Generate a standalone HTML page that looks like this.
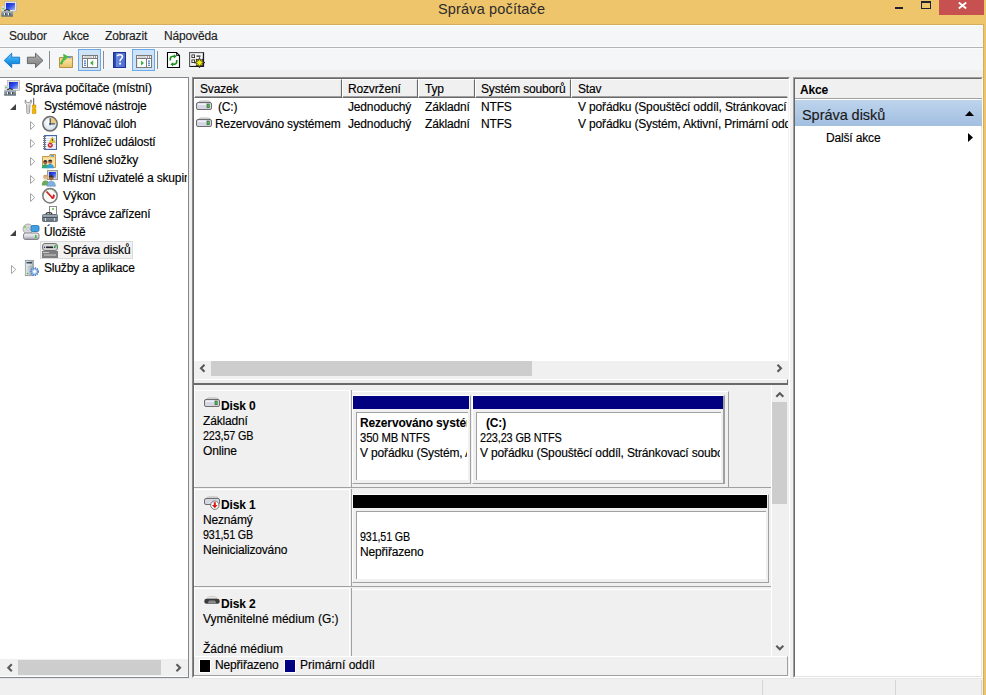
<!DOCTYPE html>
<html><head><meta charset="utf-8">
<style>
*{margin:0;padding:0;box-sizing:border-box}
html,body{width:986px;height:695px;overflow:hidden}
body{position:relative;background:#EFC56B;font-family:"Liberation Sans",sans-serif;font-size:12px;letter-spacing:-0.16px;color:#000;-webkit-text-stroke:0.15px currentColor}
.a{position:absolute}
.t{position:absolute;white-space:nowrap;line-height:18px;height:18px}
.b{font-weight:bold;-webkit-text-stroke:0.05px currentColor}
svg{position:absolute;overflow:visible}
.part{border-style:solid;border-width:1px;border-color:#fff #A0A0A0 #A0A0A0 #fff}
.nv{position:absolute;left:0;top:0;width:116px;height:13px}
.nv{width:calc(100% - 1px)}
.wb{position:absolute;left:3px;top:16px;height:68px;background:#fff;border-left:1px solid #A0A0A0;border-top:1px solid #A0A0A0}
.hc{top:79px;height:19px;border-style:solid;border-width:1px;border-color:#FFFFFF #696969 #696969 #FFFFFF;box-shadow:inset 0 -1px 0 #A0A0A0, inset -1px 0 0 #E3E3E3}
</style></head><body>

<div class="a" style="left:0;top:25px;width:983px;height:670px;background:#F0F0F0"></div>
<!-- TITLE BAR -->
<div class="a" style="left:0;top:24px;width:984px;height:1px;background:#D3AE5E"></div>
<div class="a" style="left:983px;top:24px;width:1px;height:671px;background:#D3AE5E"></div>
<div class="t" style="left:438px;top:1px;font-size:14.5px;line-height:16px;color:#2B2B2B;letter-spacing:0.16px;-webkit-text-stroke:0">Správa počítače</div>
<div class="a" style="left:895px;top:7px;width:8px;height:2px;background:#1F2230"></div>
<div class="a" style="left:921px;top:1px;width:10px;height:8px;border:1px solid #1F2230;border-top-width:2px"></div>
<div class="a" style="left:939px;top:0;width:45px;height:15px;background:#C75050"></div>
<svg style="left:958px;top:2px" width="9" height="7" viewBox="0 0 9 7"><path d="M0.8 0.5 L8.2 6.5 M8.2 0.5 L0.8 6.5" stroke="#fff" stroke-width="1.9"/></svg>


<!-- MENU BAR -->
<div class="a" style="left:0;top:25px;width:983px;height:22px;background:#F5F6F7;border-top:1px solid #FCFCFD"></div>
<div class="a" style="left:0;top:46px;width:983px;height:3px;background:#B4B4B4;border-top:1px solid #FBFBFB;border-bottom:1px solid #FBFBFB"></div>
<div class="t" style="left:9px;top:27px;color:#1E1E1E">Soubor</div>
<div class="t" style="left:63px;top:27px;color:#1E1E1E">Akce</div>
<div class="t" style="left:105px;top:27px;color:#1E1E1E">Zobrazit</div>
<div class="t" style="left:164px;top:27px;color:#1E1E1E">Nápověda</div>

<!-- TOOLBAR -->
<div class="a" style="left:0;top:49px;width:983px;height:21px;background:#F5F6F7"></div>
<div class="a" style="left:0;top:70px;width:983px;height:7px;background:#F0F0F0"></div>

<!-- CLIENT -->

<!-- TOOLBAR ICONS -->
<svg style="left:0;top:0" width="986" height="80" viewBox="0 0 986 80">
 <defs>
  <linearGradient id="gBlue" x1="0" y1="0" x2="0" y2="1"><stop offset="0" stop-color="#6CC8FA"/><stop offset="0.55" stop-color="#1E9BEA"/><stop offset="1" stop-color="#0A6FC8"/></linearGradient>
  <linearGradient id="gGray" x1="0" y1="0" x2="0" y2="1"><stop offset="0" stop-color="#B4B4B4"/><stop offset="1" stop-color="#7A7A7A"/></linearGradient>
  <linearGradient id="gFold" x1="0" y1="0" x2="0" y2="1"><stop offset="0" stop-color="#F8E2A0"/><stop offset="1" stop-color="#E9C46A"/></linearGradient>
  <linearGradient id="gHelp" x1="0" y1="0" x2="1" y2="0"><stop offset="0" stop-color="#2440A8"/><stop offset="0.2" stop-color="#2E4FB8"/><stop offset="0.25" stop-color="#6B89E0"/><stop offset="1" stop-color="#4868CC"/></linearGradient>
 </defs>
 <!-- app icon -->
 <g id="appic">
 <rect x="4.5" y="1.5" width="12" height="10" fill="#E6E4DC" stroke="#B8B8B0" stroke-width="0.8"/>
 <rect x="6" y="3" width="9" height="7" fill="url(#gScr)"/>
 <rect x="1.5" y="6" width="3" height="5" fill="#D8D8E0"/>
 <rect x="2.2" y="8" width="1.8" height="1" fill="#50E050"/>
 <path d="M4.5 11 C5 9.3 9 9.3 9.5 11" fill="none" stroke="#1A1A1A" stroke-width="1.2"/>
 <rect x="1.2" y="11.2" width="11.8" height="5.5" fill="url(#gSteel)"/>
 <rect x="4" y="13" width="1.2" height="2.2" fill="#F4F4F4"/><rect x="8" y="13" width="1.2" height="2.2" fill="#F4F4F4"/>
 <rect x="5.2" y="13" width="1" height="2.2" fill="#2A3440"/><rect x="9.2" y="13" width="1" height="2.2" fill="#2A3440"/>
 </g>
 <!-- back/forward -->
 <path d="M4.2 60.5 L11.7 53.2 L11.7 57.2 L19.6 57.2 L19.6 63.6 L11.7 63.6 L11.7 67.6 Z" fill="url(#gBlue)" stroke="#1273C9" stroke-width="0.9"/>
 <path d="M43 60.5 L35.5 53.2 L35.5 57.2 L27.4 57.2 L27.4 63.6 L35.5 63.6 L35.5 67.6 Z" fill="url(#gGray)" stroke="#5C5C5C" stroke-width="0.9"/>
 <rect x="49" y="51" width="1" height="18" fill="#8C8C8C"/>
 <rect x="103" y="51" width="1" height="18" fill="#8C8C8C"/>
 <rect x="157" y="51" width="1" height="18" fill="#8C8C8C"/>
 <!-- folder up -->
 <path d="M59.5 57.5 L59.5 67.5 L72.5 67.5 L72.5 56.5 L66 56.5 L65 57.5 Z" fill="#EFD08A" stroke="#B89040"/>
 <rect x="67.5" y="56.5" width="4" height="1.5" fill="#5AA0E8"/>
 <path d="M60 59.5 L72 59.5 L72 67 L60 67 Z" fill="url(#gFold)"/>
 <path d="M60.5 63.8 C61.5 60.5 62.5 58.8 64.2 57.8 L63.5 54.3 L67.8 56.6 L65.3 59.6 C63.8 60.2 62.8 61.6 62 64.2 Z" fill="#48C848" stroke="#28A028" stroke-width="0.6"/>
 <!-- highlighted btn 1 -->
 <rect x="78.5" y="49.5" width="22" height="21" fill="#CDE4F8" stroke="#6AAAEC"/>
 <rect x="82.5" y="55.5" width="15" height="12" fill="#FFFFFF" stroke="#7A7A7A"/>
 <rect x="83" y="56" width="14" height="2" fill="#F4F4F4"/>
 <rect x="84" y="56.5" width="8" height="1" fill="#B8B8B8"/>
 <rect x="93" y="56" width="1" height="2" fill="#9A9A9A"/><rect x="95" y="56" width="1" height="2" fill="#9A9A9A"/>
 <rect x="83" y="58" width="14" height="1" fill="#7A7A7A"/>
 <rect x="87" y="59" width="1" height="8" fill="#7A7A7A"/>
 <rect x="84" y="60.5" width="2" height="1.2" fill="#3C78C8"/><rect x="84" y="62.6" width="2" height="1.2" fill="#3C78C8"/><rect x="84" y="64.7" width="2" height="1.2" fill="#3C78C8"/>
 <path d="M93 60.5 L90 63 L93 65.5 Z" fill="#3CB43C"/>
 <rect x="93" y="60" width="1" height="6" fill="#E8E8E8"/>
 <!-- help -->
 <rect x="113" y="52" width="13" height="16" fill="url(#gHelp)"/>
 <rect x="113.5" y="52.5" width="12" height="15" fill="none" stroke="#1E3296" stroke-width="1"/>
 <path d="M117.3 56.3 C117.3 54.3 122.5 54 122.5 56.8 C122.5 58.6 120 59 120 61.2" fill="none" stroke="#fff" stroke-width="1.6"/>
 <rect x="119.2" y="62.7" width="1.8" height="1.8" fill="#fff"/>
 <!-- highlighted btn 2 -->
 <rect x="132.5" y="49.5" width="22" height="21" fill="#CDE4F8" stroke="#6AAAEC"/>
 <rect x="136.5" y="55.5" width="15" height="12" fill="#FFFFFF" stroke="#7A7A7A"/>
 <rect x="137" y="56" width="14" height="2" fill="#F4F4F4"/>
 <rect x="138" y="56.5" width="8" height="1" fill="#B8B8B8"/>
 <rect x="147" y="56" width="1" height="2" fill="#9A9A9A"/><rect x="149" y="56" width="1" height="2" fill="#9A9A9A"/>
 <rect x="137" y="58" width="14" height="1" fill="#7A7A7A"/>
 <rect x="146" y="59" width="1" height="8" fill="#7A7A7A"/>
 <rect x="148" y="60.5" width="2" height="1.2" fill="#3C78C8"/><rect x="148" y="62.6" width="2" height="1.2" fill="#3C78C8"/><rect x="148" y="64.7" width="2" height="1.2" fill="#3C78C8"/>
 <path d="M141 60.5 L144 63 L141 65.5 Z" fill="#3CB43C"/>
 <rect x="137" y="59" width="1" height="8" fill="#E8E8E8"/>
 <!-- refresh doc -->
 <path d="M167.5 52.5 L176.5 52.5 L179.5 55.5 L179.5 67.5 L167.5 67.5 Z" fill="#fff" stroke="#000" stroke-width="1.1"/>
 <path d="M176.5 52.5 L176.5 55.5 L179.5 55.5" fill="none" stroke="#000" stroke-width="0.8"/>
 <path d="M170.3 60.5 L170.3 58.5 C170.3 57 171.5 56.3 174 56.3" fill="none" stroke="#1A8F1A" stroke-width="1.6"/>
 <path d="M173.8 54.2 L176.6 56.3 L173.8 58.4 Z" fill="#1A8F1A"/>
 <path d="M176.7 60 L176.7 62 C176.7 63.5 175.5 64.3 173 64.3" fill="none" stroke="#1A8F1A" stroke-width="1.6"/>
 <path d="M173.2 62.2 L170.4 64.3 L173.2 66.4 Z" fill="#1A8F1A"/>
 <!-- properties -->
 <rect x="189.5" y="52.5" width="14" height="14" fill="#E0E0E0" stroke="#5A5A5A"/>
 <path d="M190 66.5 L203.5 66.5 L203.5 52.5" fill="none" stroke="#1A1A1A" stroke-width="1.2"/>
 <rect x="191" y="54" width="11" height="11" fill="#F6F6F6"/>
 <rect x="191.5" y="54.5" width="3.5" height="3.5" fill="#1A1A1A"/><rect x="192.3" y="55.3" width="1.9" height="1.9" fill="#fff"/>
 <rect x="196.5" y="55.5" width="4" height="1.2" fill="#1A1A1A"/>
 <rect x="191.5" y="59.5" width="3.5" height="3.5" fill="#1A1A1A"/><rect x="192.3" y="60.3" width="1.9" height="1.9" fill="#fff"/>
 <rect x="196.5" y="59.5" width="4" height="3.5" fill="#1A1A1A"/>
 <path d="M199.5 57.5 L200.4 60.4 L203 59 L201.8 61.7 L205 62.6 L201.8 63.5 L203 66.3 L200.4 64.9 L199.5 67.8 L198.6 64.9 L196 66.3 L197.2 63.5 L194 62.6 L197.2 61.7 L196 59 L198.6 60.4 Z" fill="#F4EC10" stroke="#1A1A1A" stroke-width="0.8"/>
</svg>


<!-- TREE PANE -->
<div class="a" style="left:0;top:77px;width:189px;height:601px;background:#fff;border-top:1px solid #828790;border-right:1px solid #828790;border-bottom:1px solid #828790"></div>
<div class="a" style="left:40px;top:241px;width:93px;height:18px;background:#F2F2F2;border:1px solid #DADADA"></div>
<div class="t" style="left:25px;top:79px">Správa počítače (místní)</div>
<div class="t" style="left:44px;top:97px">Systémové nástroje</div>
<div class="t" style="left:63px;top:115px">Plánovač úloh</div>
<div class="t" style="left:63px;top:133px">Prohlížeč událostí</div>
<div class="t" style="left:63px;top:151px">Sdílené složky</div>
<div class="a" style="left:63px;top:169px;width:124px;height:18px;overflow:hidden"><div class="t" style="left:0;top:0">Místní uživatelé a skupiny</div></div>
<div class="t" style="left:63px;top:187px">Výkon</div>
<div class="t" style="left:63px;top:205px">Správce zařízení</div>
<div class="t" style="left:44px;top:223px">Úložiště</div>
<div class="t" style="left:63px;top:241px">Správa disků</div>
<div class="t" style="left:44px;top:259px">Služby a aplikace</div>
<!-- tree scrollbar -->
<div class="a" style="left:0;top:659px;width:188px;height:17px;background:#F0F0F0"></div>
<div class="a" style="left:18px;top:660px;width:143px;height:15px;background:#CDCDCD"></div>
<svg style="left:0;top:0" width="986" height="695" viewBox="0 0 986 695">
 <path d="M11.8 664.3 L8.3 667.8 L11.8 671.3" fill="none" stroke="#5A5A5A" stroke-width="2.1"/>
 <path d="M176.5 664.3 L180 667.8 L176.5 671.3" fill="none" stroke="#5A5A5A" stroke-width="2.1"/>
</svg>


<!-- TREE ICONS -->
<svg style="left:0;top:0" width="986" height="695" viewBox="0 0 986 695">
 <defs>
  <linearGradient id="gScr" x1="0" y1="0" x2="1" y2="1"><stop offset="0" stop-color="#1020C8"/><stop offset="0.5" stop-color="#3050E8"/><stop offset="1" stop-color="#A8B8F0"/></linearGradient>
  <radialGradient id="gFace" cx="0.4" cy="0.4" r="0.7"><stop offset="0" stop-color="#FFFFFF"/><stop offset="1" stop-color="#C8D8E8"/></radialGradient>
  <linearGradient id="gDrv" x1="0" y1="0" x2="0" y2="1"><stop offset="0" stop-color="#F4F4F8"/><stop offset="0.5" stop-color="#D8D8E0"/><stop offset="1" stop-color="#9A9AA4"/></linearGradient>
  <linearGradient id="gSteelL" x1="0" y1="0" x2="1" y2="0"><stop offset="0" stop-color="#E4EAEE"/><stop offset="1" stop-color="#98A4AC"/></linearGradient>
  <linearGradient id="gSteel" x1="0" y1="0" x2="0" y2="1"><stop offset="0" stop-color="#A8B4BC"/><stop offset="1" stop-color="#5E6A74"/></linearGradient>
 </defs>
 <!-- expanders -->
 <path d="M16 104 L16 110 L10 110 Z" fill="#404040"/>
 <path d="M16 230 L16 236 L10 236 Z" fill="#404040"/>
 <g fill="none" stroke="#A6A6A6" stroke-width="1">
  <path d="M30.5 121.5 L34.8 125.5 L30.5 129.5 Z"/>
  <path d="M30.5 139.5 L34.8 143.5 L30.5 147.5 Z"/>
  <path d="M30.5 157.5 L34.8 161.5 L30.5 165.5 Z"/>
  <path d="M30.5 175.5 L34.8 179.5 L30.5 183.5 Z"/>
  <path d="M30.5 193.5 L34.8 197.5 L30.5 201.5 Z"/>
  <path d="M11.5 265.5 L15.8 269.5 L11.5 273.5 Z"/>
 </g>
 <!-- row0 computer mgmt -->
 <use href="#appic" x="3" y="79"/>
 <!-- row1 tools -->
 <path d="M25.6 99.8 C24.6 101.3 24.9 103.4 26.6 104.4 L26.9 112.6 C26.9 113.9 29.6 113.9 29.6 112.6 L29.9 104.4 C31.6 103.4 31.9 101.3 30.9 99.8 L30.4 101.9 L29 102.6 L27.5 102.6 L26.1 101.9 Z" fill="#ECECEC" stroke="#8A8A8A" stroke-width="0.9"/>
 <rect x="27.6" y="105" width="1.2" height="7.5" fill="#C8C8C8"/>
 <rect x="33.1" y="98" width="1.1" height="7.2" fill="#6A6A6A"/>
 <path d="M32.3 105 L35.9 105 L35.9 107.4 L35.2 108.2 L35.9 109 L35.9 113.3 C35.9 113.8 32.3 113.8 32.3 113.3 L32.3 109 L33 108.2 L32.3 107.4 Z" fill="#F2B600" stroke="#C48A00" stroke-width="0.6"/>
 <!-- row2 clock -->
 <circle cx="50" cy="123.8" r="7.1" fill="url(#gFace)" stroke="#6E6E6E" stroke-width="1.7"/>
 <circle cx="50" cy="123.8" r="6" fill="none" stroke="#D0D8E0" stroke-width="0.6"/>
 <path d="M50.2 117.6 A6.2 6.2 0 0 1 56.2 123.6 L50.2 123.6 Z" fill="#EDCB7A"/>
 <path d="M50.2 118.3 L50.2 125.2 M49 123.8 L54.8 123.8" fill="none" stroke="#3E5066" stroke-width="1.2"/>
 <!-- row3 event viewer -->
 <rect x="44.5" y="135.5" width="12" height="14" fill="#D4E2F4" stroke="#4A66AA"/>
 <g stroke="#FFFFFF" stroke-width="1"><path d="M46 137.5 H55.5 M46 139.5 H55.5 M46 141.5 H55.5 M46 143.5 H55.5 M46 145.5 H55.5 M46 147.5 H55.5"/></g>
 <g fill="#7A7A7A"><rect x="43" y="136" width="3" height="1"/><rect x="43" y="138" width="3" height="1"/><rect x="43" y="140" width="3" height="1"/><rect x="43" y="142" width="3" height="1"/><rect x="43" y="144" width="3" height="1"/><rect x="43" y="146" width="3" height="1"/><rect x="43" y="148" width="3" height="1"/></g>
 <path d="M52.3 137 L55.3 142.6 L49.3 142.6 Z" fill="#F6D422" stroke="#C8A418" stroke-width="0.6"/>
 <rect x="51.9" y="138.8" width="0.9" height="2.4" fill="#333"/>
 <circle cx="50.3" cy="145.2" r="2.5" fill="#D02830"/>
 <path d="M49.3 144.2 L51.3 146.2 M51.3 144.2 L49.3 146.2" stroke="#fff" stroke-width="0.8"/>
 <!-- row4 shared folder -->
 <path d="M42.5 156.5 L49 156.5 L50 154.5 L55.5 154.5 L55.5 167.5 L42.5 167.5 Z" fill="#F2D48A" stroke="#C49A48"/>
 <rect x="50.5" y="155.3" width="3.5" height="1.3" fill="#3A8EE0"/>
 <path d="M43 158 L55 158 L55 167 L43 167 Z" fill="#F8E2A8"/>
 <path d="M41.8 168.3 C41.8 165 44 164.3 45.3 164.3 C46.6 164.3 48.8 165 48.8 168.3 Z" fill="#2FA86A"/>
 <circle cx="45.3" cy="162.3" r="2" fill="#9A6040"/><path d="M43.2 161.8 C43.2 159.6 47.4 159.6 47.4 161.8 Z" fill="#2A2A2A"/>
 <path d="M46.5 168.3 C46.5 164.7 48.7 164 50.2 164 C51.7 164 53.9 164.7 53.9 168.3 Z" fill="#3AA0D8"/>
 <circle cx="50.2" cy="161.8" r="2" fill="#A86A48"/><path d="M48.1 161.3 C48.1 159.1 52.3 159.1 52.3 161.3 Z" fill="#2A2A2A"/>
 <!-- row5 users -->
 <rect x="47.5" y="170.5" width="10" height="9" fill="#D8D8CC" stroke="#9A9A8C"/>
 <rect x="49" y="172" width="7" height="6" fill="url(#gScr)"/>
 <path d="M41.8 185.5 C41.8 181.5 43.5 180.5 45.5 180.5 C47.5 180.5 49.2 181.5 49.2 185.5 Z" fill="#6AAA58"/>
 <circle cx="45.5" cy="177.3" r="2.3" fill="#E0B888"/><path d="M43.2 176.5 C43.2 174 47.8 174 47.8 176.5 Z" fill="#C8A868"/>
 <path d="M47 186.3 C47 182.3 49 181.3 51.2 181.3 C53.4 181.3 55.4 182.3 55.4 186.3 Z" fill="#80B0E0" stroke="#5A88B8" stroke-width="0.5"/>
 <circle cx="51.2" cy="178" r="2.4" fill="#9A6848"/><path d="M48.8 177.2 C48.8 174.6 53.6 174.6 53.6 177.2 Z" fill="#3A2A20"/>
 <!-- row6 performance -->
 <circle cx="50" cy="195.7" r="7.2" fill="#FBFBF8" stroke="#7A7A7A" stroke-width="1.5"/>
 <path d="M45 192 A5.5 5.5 0 0 1 55 193" fill="none" stroke="#5A9A6A" stroke-width="1" stroke-dasharray="1 1"/>
 <path d="M46.5 191.5 L53 198.5" stroke="#D82020" stroke-width="1.8"/>
 <path d="M53.5 194 L55 195.5 L54 198.5 L51.5 199 Z" fill="#D82020"/>
 <!-- row7 device manager -->
 <rect x="49.5" y="206.5" width="7" height="8" fill="#FFFFFF" stroke="#8A8A8A"/>
 <circle cx="53" cy="209" r="1" fill="#50C040"/>
 <path d="M46 214.5 C46 212 52 212 52 214.5" fill="none" stroke="#333" stroke-width="1.2"/>
 <rect x="42.5" y="214.5" width="15" height="7" rx="1" fill="url(#gSteel)" stroke="#56606A" stroke-width="0.8"/>
 <rect x="43" y="217" width="14" height="1" fill="#48525C"/>
 <rect x="45" y="218" width="1" height="3" fill="#D0D8DC"/><rect x="54" y="218" width="1" height="3" fill="#D0D8DC"/>
 <!-- row8 storage -->
 <circle cx="28" cy="229" r="5" fill="#D8D8D8" stroke="#9A9A9A" stroke-width="0.8"/>
 <circle cx="28" cy="229" r="1.3" fill="#fff" stroke="#888" stroke-width="0.5"/>
 <circle cx="25" cy="227" r="0.9" fill="#60D040"/>
 <rect x="31" y="225.5" width="8" height="6" rx="1.5" fill="#40A0E0" stroke="#2070B0" stroke-width="0.8"/>
 <rect x="23.5" y="233" width="15.5" height="6.5" rx="2" fill="url(#gDrv)" stroke="#7A7A84" stroke-width="0.9"/>
 <rect x="35" y="235" width="1.6" height="3" fill="#40C040"/>
 <!-- row9 disk mgmt -->
 <rect x="42.5" y="243.5" width="15" height="7" rx="2.5" fill="#D4D4D4" stroke="#6A6A6A" stroke-width="0.9"/>
 <rect x="46" y="246.5" width="7" height="1.6" fill="#222"/>
 <circle cx="44.5" cy="247.3" r="0.7" fill="#2030A0"/><circle cx="54.5" cy="247.3" r="0.7" fill="#2030A0"/>
 <rect x="54.5" y="245" width="2" height="2.5" fill="#40C040"/>
 <rect x="42" y="251" width="16" height="7" fill="#7E7E7E"/>
 <rect x="43" y="252" width="6" height="1" fill="#C8C8C8"/>
 <rect x="44" y="254.5" width="12" height="1" fill="#D0D0D0"/>
 <!-- row10 services -->
 <rect x="25.3" y="260.3" width="8" height="15.4" fill="#C4CED4" stroke="#7A868E" stroke-width="0.7"/>
 <rect x="25.8" y="261" width="7" height="14" fill="url(#gSteelL)"/>
 <rect x="26.5" y="262" width="5.5" height="1.4" fill="#3A4A5A"/>
 <rect x="26.5" y="264.5" width="5.5" height="0.8" fill="#F4F6F8"/>
 <circle cx="27.5" cy="273.5" r="0.8" fill="#40C040"/>
 <circle cx="34.6" cy="271.6" r="3.6" fill="#B8D4F0" stroke="#4A7CC0" stroke-width="1.7" stroke-dasharray="1.2 0.9"/>
 <circle cx="34.6" cy="271.6" r="3" fill="none" stroke="#6A9AD8" stroke-width="0.8"/>
 <circle cx="34.6" cy="271.6" r="1.3" fill="#FFFFFF"/>
</svg>


<!-- LIST VIEW -->
<div class="a" style="left:192px;top:77px;width:598px;height:601px;border-style:solid;border-width:1px;border-color:#8A8A8A #FFFFFF #FFFFFF #8A8A8A"></div>
<div class="a" style="left:193px;top:78px;width:596px;height:599px;border-style:solid;border-width:1px;border-color:#696969 #F0F0F0 #FFFFFF #696969;background:#F0F0F0"></div>
<div class="a" style="left:194px;top:79px;width:594px;height:300px;background:#fff"></div>
<div class="a" style="left:194px;top:79px;width:594px;height:19px;background:#F0F0F0"></div>
<div class="a hc" style="left:194px;width:148px"></div>
<div class="a hc" style="left:342px;width:76px"></div>
<div class="a hc" style="left:418px;width:57px"></div>
<div class="a hc" style="left:475px;width:96px"></div>
<div class="a hc" style="left:571px;width:217px;border-right-color:#F0F0F0;box-shadow:inset 0 -1px 0 #A0A0A0"></div>
<div class="t" style="left:200px;top:80px">Svazek</div>
<div class="t" style="left:348px;top:80px">Rozvržení</div>
<div class="t" style="left:425px;top:80px">Typ</div>
<div class="t" style="left:481px;top:80px">Systém souborů</div>
<div class="t" style="left:578px;top:80px">Stav</div>
<div class="t" style="left:218px;top:98px">(C:)</div>
<div class="t" style="left:348px;top:98px">Jednoduchý</div>
<div class="t" style="left:425px;top:98px">Základní</div>
<div class="t" style="left:481px;top:98px">NTFS</div>
<div class="a" style="left:578px;top:98px;width:210px;height:18px;overflow:hidden"><div class="t" style="left:0;top:0">V pořádku (Spouštěcí oddíl, Stránkovací soubor, Výpis stavu systému, Primární oddíl)</div></div>
<div class="t" style="left:215px;top:115px">Rezervováno systémem</div>
<div class="t" style="left:348px;top:115px">Jednoduchý</div>
<div class="t" style="left:425px;top:115px">Základní</div>
<div class="t" style="left:481px;top:115px">NTFS</div>
<div class="a" style="left:578px;top:115px;width:210px;height:18px;overflow:hidden"><div class="t" style="left:0;top:0">V pořádku (Systém, Aktivní, Primární oddíl)</div></div>
<!-- list h scrollbar -->
<div class="a" style="left:194px;top:361px;width:594px;height:18px;background:#F0F0F0"></div>
<div class="a" style="left:211px;top:361px;width:321px;height:15px;background:#CDCDCD"></div>

<!-- LOWER GRAPHIC PANE -->
<div class="a" style="left:194px;top:379px;width:594px;height:6px;background:#EBEBEB;border-top:1px solid #fff;border-bottom:2px solid #696969;border-right:1px solid #696969"></div>
<div class="a" style="left:194px;top:385px;width:1px;height:271px;background:#fff"></div>
<!-- v scrollbar -->
<div class="a" style="left:771px;top:385px;width:1px;height:272px;background:#FFFFFF"></div>
<div class="a" style="left:772px;top:402px;width:15px;height:102px;background:#CDCDCD"></div>


<!-- DISK ROWS -->
<div class="a" style="left:194px;top:390px;width:155px;height:1px;background:#fff"></div>
<div class="a" style="left:349px;top:390px;width:1px;height:97px;background:#fff"></div>
<div class="a" style="left:351px;top:390px;width:1px;height:98px;background:#A0A0A0"></div>
<div class="a" style="left:194px;top:487px;width:577px;height:1px;background:#A0A0A0"></div>
<div class="a" style="left:194px;top:489px;width:155px;height:1px;background:#fff"></div>
<div class="a" style="left:349px;top:489px;width:1px;height:97px;background:#fff"></div>
<div class="a" style="left:351px;top:489px;width:1px;height:98px;background:#A0A0A0"></div>
<div class="a" style="left:194px;top:586px;width:577px;height:1px;background:#A0A0A0"></div>
<div class="a" style="left:194px;top:588px;width:155px;height:1px;background:#fff"></div>
<div class="a" style="left:349px;top:588px;width:1px;height:68px;background:#fff"></div>
<div class="a" style="left:351px;top:588px;width:1px;height:68px;background:#A0A0A0"></div>
<!-- disk0 container -->
<div class="a" style="left:352px;top:391px;width:377px;height:97px;border-style:solid;border-width:1px 1px 0 0;border-color:#fff #A0A0A0 #A0A0A0 #fff"></div>
<div class="a part" style="left:352px;top:395px;width:119px;height:89px"><div class="nv" style="background:#000080"></div><div class="wb" style="width:112px"></div></div>
<div class="a part" style="left:472px;top:395px;width:253px;height:89px;border-right-width:2px;border-right-color:#A0A0A0"><div class="nv" style="background:#000080;width:250px"></div><div class="wb" style="width:245px"></div></div>
<!-- disk1 partition -->
<div class="a" style="left:352px;top:589px;width:419px;height:1px;background:#fff"></div>
<div class="a part" style="left:352px;top:494px;width:417px;height:89px"><div class="nv" style="background:#000"></div><div class="wb" style="width:410px"></div></div>

<div class="a" style="left:357px;top:414px;width:110px;height:60px;overflow:hidden">
 <div class="t b" style="left:3px;top:0">Rezervováno systémem</div>
 <div class="t" style="left:3px;top:15px;transform:scaleX(0.942);transform-origin:0 0">350 MB NTFS</div>
 <div class="t" style="left:3px;top:30px">V pořádku (Systém, Aktivní, Primární oddíl)</div>
</div>
<div class="a" style="left:477px;top:414px;width:243px;height:60px;overflow:hidden">
 <div class="t b" style="left:9px;top:0">(C:)</div>
 <div class="t" style="left:3px;top:15px;transform:scaleX(0.91);transform-origin:0 0">223,23 GB NTFS</div>
 <div class="t" style="left:3px;top:30px">V pořádku (Spouštěcí oddíl, Stránkovací soubor, Výpis stavu)</div>
</div>
<div class="t" style="left:360px;top:528px;transform:scaleX(0.895);transform-origin:0 0">931,51 GB</div>
<div class="t" style="left:360px;top:543px">Nepřiřazeno</div>

<div class="t b" style="left:221px;top:397px">Disk 0</div>
<div class="t" style="left:203px;top:412px">Základní</div>
<div class="t" style="left:203px;top:427px;transform:scaleX(0.90);transform-origin:0 0">223,57 GB</div>
<div class="t" style="left:203px;top:442px">Online</div>
<div class="t b" style="left:221px;top:496px">Disk 1</div>
<div class="t" style="left:203px;top:511px">Neznámý</div>
<div class="t" style="left:203px;top:526px;transform:scaleX(0.895);transform-origin:0 0">931,51 GB</div>
<div class="t" style="left:203px;top:541px">Neinicializováno</div>
<div class="t b" style="left:221px;top:595px">Disk 2</div>
<div class="t" style="left:203px;top:610px;letter-spacing:0px">Vyměnitelné médium (G:)</div>
<div class="t" style="left:203px;top:640px;letter-spacing:0px">Žádné médium</div>

<!-- legend -->
<div class="a" style="left:194px;top:656px;width:594px;height:20px;background:#F0F0F0;border-top:1px solid #fff;border-bottom:1px solid #A0A0A0;border-right:1px solid #A0A0A0"></div>
<div class="a" style="left:199px;top:659px;width:12px;height:14px;background:#000;border:1px solid #fff"></div>
<div class="t" style="left:215px;top:656px">Nepřiřazeno</div>
<div class="a" style="left:284px;top:659px;width:12px;height:14px;background:#000080;border:1px solid #fff"></div>
<div class="t" style="left:300px;top:656px;letter-spacing:0px">Primární oddíl</div>

<!-- ACTIONS PANE -->
<div class="a" style="left:793px;top:77px;width:190px;height:601px;border-style:solid;border-width:1px;border-color:#A0A0A0 #FFFFFF #FFFFFF #A0A0A0"></div>
<div class="a" style="left:794px;top:78px;width:188px;height:599px;border-style:solid;border-width:1px;border-color:#696969 #E3E3E3 #E3E3E3 #696969;background:#fff"></div>
<div class="a" style="left:795px;top:79px;width:187px;height:20px;background:#F0F0F0;border-bottom:1px solid #A0A0A0"></div>
<div class="t b" style="left:800px;top:81px">Akce</div>
<div class="a" style="left:795px;top:100px;width:187px;height:26px;background:linear-gradient(#BDD4EC,#A2BEE0)"></div>
<div class="t" style="left:802px;top:104.5px;font-size:14.5px;line-height:20px;height:20px;letter-spacing:-0.05px;color:#1A1A1A">Správa disků</div>
<div class="t" style="left:826px;top:129px">Další akce</div>

<!-- STATUS BAR -->
<div class="a" style="left:0;top:678px;width:983px;height:17px;background:#F0F0F0;border-top:1px solid #E6E6E6"></div>
<div class="a" style="left:762px;top:680px;width:1px;height:15px;background:#D5D5D5"></div>
<div class="a" style="left:895px;top:680px;width:1px;height:15px;background:#D5D5D5"></div>
<div class="a" style="left:981px;top:680px;width:1px;height:15px;background:#D5D5D5"></div>

<!-- PANE ICONS -->
<svg style="left:0;top:0" width="986" height="695" viewBox="0 0 986 695">
 <!-- list drive icons -->
 <g id="drv">
  <path d="M198.5 102.5 C199 101.2 200 101 201.5 101 L207.5 101 C209 101 210 101.2 210.5 102.5 Z" fill="#E4E4E4" stroke="#A8A8A8" stroke-width="0.8"/>
  <rect x="196.5" y="102.5" width="15" height="7" rx="1.5" fill="#D6D6E4" stroke="#6E6E6E" stroke-width="1"/>
  <rect x="198" y="103.6" width="8" height="1.2" fill="#F8F8FF"/>
  <rect x="207" y="104" width="2.2" height="3.8" fill="#30D030" stroke="#3A3A3A" stroke-width="0.5"/>
 </g>
 <use href="#drv" y="17"/>
 <!-- scroll arrows -->
 <g fill="none" stroke="#5A5A5A" stroke-width="2.1" stroke-linejoin="miter">
  <path d="M204.5 364.8 L201 368.3 L204.5 371.8"/>
  <path d="M777.5 364.8 L781 368.3 L777.5 371.8"/>
  <path d="M776.3 396.8 L779.8 393.3 L783.3 396.8"/>
  <path d="M776.3 645.8 L779.8 649.3 L783.3 645.8"/>
 </g>
 <!-- disk icons -->
 <use href="#drv" x="8" y="297"/>
 <path d="M206.5 498.5 C207 497.2 208 497 209.5 497 L215.5 497 C217 497 218 497.2 218.5 498.5 Z" fill="#E4E4E4" stroke="#A8A8A8" stroke-width="0.8"/>
 <rect x="204.5" y="498.5" width="15" height="6" rx="1.5" fill="#D6D6E4" stroke="#6E6E6E" stroke-width="1"/>
 <circle cx="214.8" cy="505.2" r="4.2" fill="#F6FAFA" stroke="#6A6A6A" stroke-width="0.9"/>
 <path d="M213.8 502.3 L215.8 502.3 L215.8 505 L217.6 505 L214.8 508.2 L212 505 L213.8 505 Z" fill="#D81818"/>
 <path d="M207 598.5 C207.5 597 209 596.5 211 596.5 L213 596.5 C215 596.5 216.5 597 217 598.5 Z" fill="#E8E8E8" stroke="#C0C0C0" stroke-width="0.6"/>
 <rect x="204.3" y="598.8" width="15.4" height="5" rx="2.2" fill="#3A3A3A"/>
 <path d="M207.5 603.5 L209 600.5 L215 600.5 L216.5 603.5 Z" fill="#8A8A8A"/>
 <!-- action triangles -->
 <path d="M965 116 L969.5 111 L974 116 Z" fill="#000"/>
 <path d="M968 133 L973 137.5 L968 142 Z" fill="#000"/>
</svg>

<!--PANES-->

</body></html>
